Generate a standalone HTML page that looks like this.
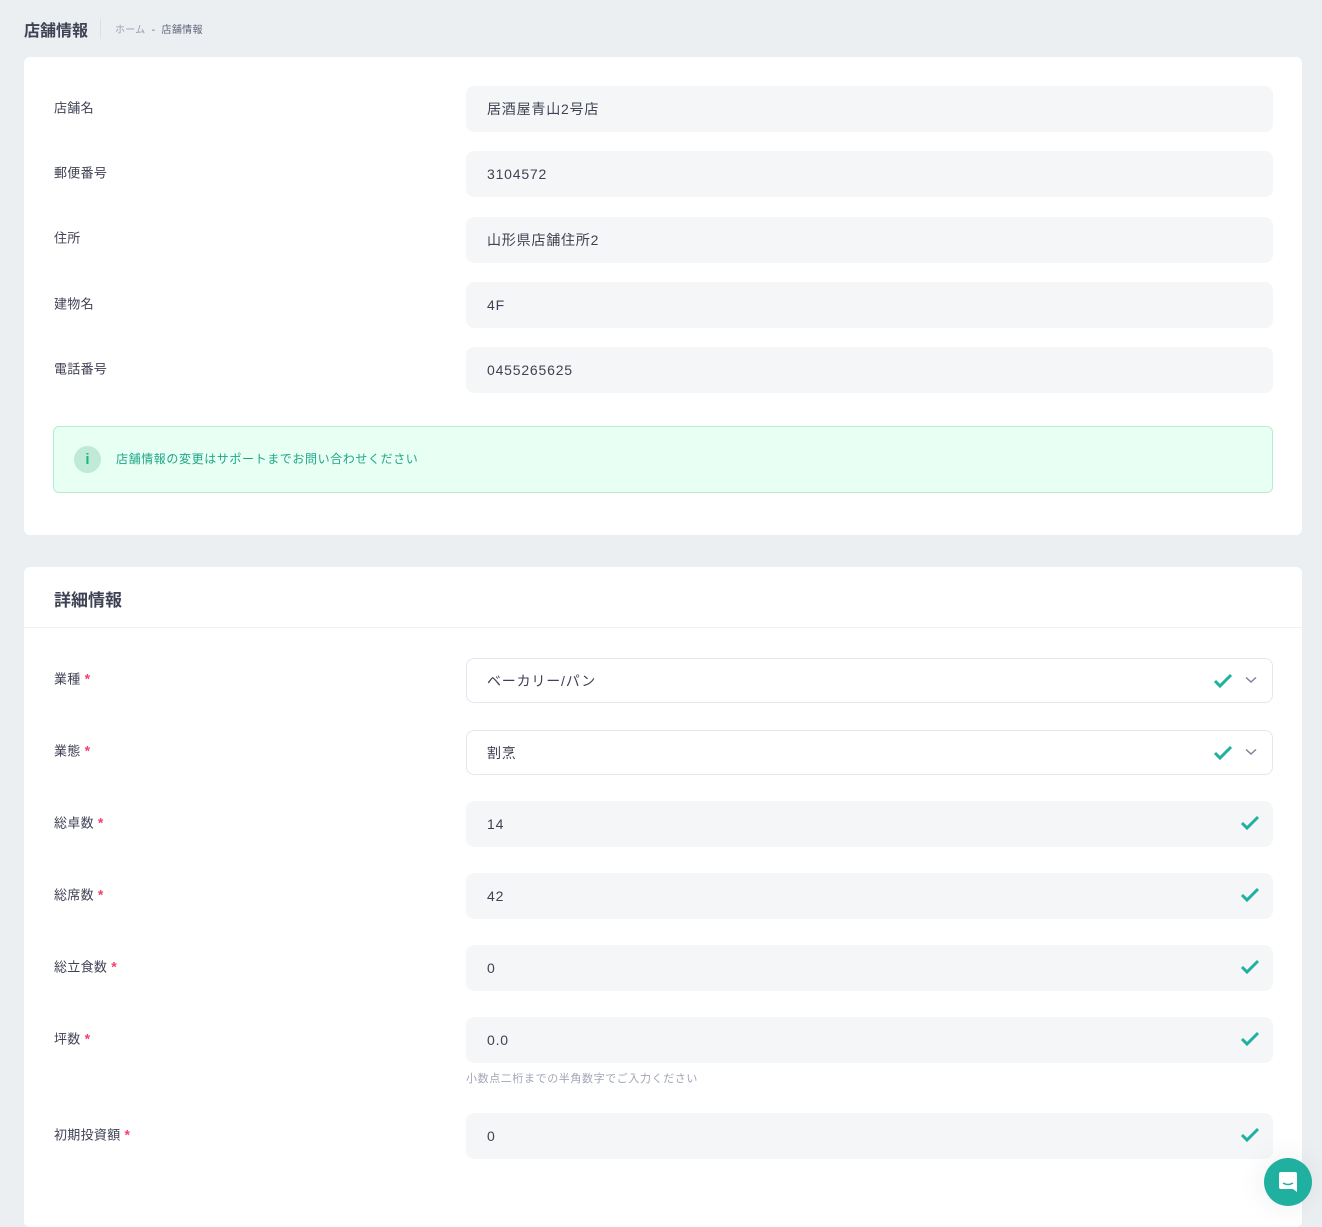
<!DOCTYPE html>
<html><head><meta charset="utf-8"><style>
*{box-sizing:border-box;margin:0;padding:0}
body{width:1322px;height:1216px;overflow:hidden;background:#eceff2;font-family:"Liberation Sans","Noto Sans CJK JP",sans-serif;color:#3f4254;position:relative}
.a{position:absolute}
.card{position:absolute;left:24px;width:1278px;background:#fff;border-radius:6px}
.lbl{position:absolute;left:54px;font-size:13px;color:#3f4254;transform:translateY(-50%);letter-spacing:0.3px}
.lbl b{color:#f1416c;font-weight:bold;margin-left:4px;font-size:14px}
.inp{position:absolute;left:466px;width:807px;height:46px;background:#f5f6f7;border-radius:8px;font-size:14px;color:#3f4254;padding-left:21px;line-height:46px;letter-spacing:0.8px}
.sel{background:#fff;border:1px solid #e4e6ef;line-height:44px;padding-left:20px}
.chk{position:absolute;top:13px}
</style></head><body>
<div class="a" style="left:24px;top:17px;font-size:16px;font-weight:bold;color:#3f4254">店舗情報</div>
<div class="a" style="left:100px;top:19px;width:1px;height:20px;background:#dcdfe6"></div>
<div class="a" style="left:115px;top:21px;font-size:10px;color:#9a9cae;letter-spacing:0.3px">ホーム <span style="color:#5e6278">&nbsp;-&nbsp; 店舗情報</span></div>

<div class="card" style="top:57px;height:478px"></div>
<div class="lbl" style="top:107px">店舗名</div><div class="inp" style="top:86px">居酒屋青山2号店</div>
<div class="lbl" style="top:172px">郵便番号</div><div class="inp" style="top:151px">3104572</div>
<div class="lbl" style="top:237px">住所</div><div class="inp" style="top:217px">山形県店舗住所2</div>
<div class="lbl" style="top:303px">建物名</div><div class="inp" style="top:282px">4F</div>
<div class="lbl" style="top:368px">電話番号</div><div class="inp" style="top:347px">0455265625</div>
<div class="a" style="left:53px;top:426px;width:1220px;height:67px;background:#e8fff3;border:1px solid #b8ecd2;border-radius:6px"></div>
<div class="a" style="left:74px;top:446px;width:27px;height:27px;border-radius:50%;background:#bfead7;color:#1cb389;font-weight:bold;font-size:15px;text-align:center;line-height:27px">i</div>
<div class="a" style="left:116px;top:450px;font-size:12px;color:#1fa688;letter-spacing:0.6px">店舗情報の変更はサポートまでお問い合わせください</div>

<div class="card" style="top:567px;height:660px"></div>
<div class="a" style="left:54px;top:586px;font-size:17px;font-weight:bold;color:#3f4254">詳細情報</div>
<div class="a" style="left:24px;top:627px;width:1278px;height:1px;background:#eff0f3"></div>

<div class="lbl" style="top:678px">業種<b>*</b></div>
<div class="inp sel" style="top:658px;height:45px">ベーカリー/パン
<svg class="chk" style="left:746px" width="20" height="18" viewBox="0 0 20 18"><path d="M2 9l5 5L18 3" fill="none" stroke="#20b0a0" stroke-width="3"/></svg>
<svg class="a" style="left:778px;top:17px" width="12" height="8" viewBox="0 0 12 8"><path d="M1 1.5l5 4.5 5-4.5" fill="none" stroke="#7e8299" stroke-width="1.5"/></svg></div>
<div class="lbl" style="top:750px">業態<b>*</b></div>
<div class="inp sel" style="top:730px;height:45px">割烹
<svg class="chk" style="left:746px" width="20" height="18" viewBox="0 0 20 18"><path d="M2 9l5 5L18 3" fill="none" stroke="#20b0a0" stroke-width="3"/></svg>
<svg class="a" style="left:778px;top:17px" width="12" height="8" viewBox="0 0 12 8"><path d="M1 1.5l5 4.5 5-4.5" fill="none" stroke="#7e8299" stroke-width="1.5"/></svg></div>

<div class="lbl" style="top:822px">総卓数<b>*</b></div><div class="inp" style="top:801px">14<svg class="chk" style="left:774px" width="20" height="18" viewBox="0 0 20 18"><path d="M2 9l5 5L18 3" fill="none" stroke="#20b0a0" stroke-width="3"/></svg></div>
<div class="lbl" style="top:894px">総席数<b>*</b></div><div class="inp" style="top:873px">42<svg class="chk" style="left:774px" width="20" height="18" viewBox="0 0 20 18"><path d="M2 9l5 5L18 3" fill="none" stroke="#20b0a0" stroke-width="3"/></svg></div>
<div class="lbl" style="top:966px">総立食数<b>*</b></div><div class="inp" style="top:945px">0<svg class="chk" style="left:774px" width="20" height="18" viewBox="0 0 20 18"><path d="M2 9l5 5L18 3" fill="none" stroke="#20b0a0" stroke-width="3"/></svg></div>
<div class="lbl" style="top:1038px">坪数<b>*</b></div><div class="inp" style="top:1017px">0.0<svg class="chk" style="left:774px" width="20" height="18" viewBox="0 0 20 18"><path d="M2 9l5 5L18 3" fill="none" stroke="#20b0a0" stroke-width="3"/></svg></div>
<div class="a" style="left:466px;top:1070px;font-size:11px;color:#a1a5b7;letter-spacing:0.6px">小数点二桁までの半角数字でご入力ください</div>
<div class="lbl" style="top:1134px">初期投資額<b>*</b></div><div class="inp" style="top:1113px">0<svg class="chk" style="left:774px" width="20" height="18" viewBox="0 0 20 18"><path d="M2 9l5 5L18 3" fill="none" stroke="#20b0a0" stroke-width="3"/></svg></div>

<div class="a" style="left:1264px;top:1158px;width:48px;height:48px;border-radius:50%;background:#20b0a0;box-shadow:0 0 30px rgba(0,0,0,.08)">
<svg class="a" style="left:14px;top:13px" width="20" height="22" viewBox="0 0 20 22"><path d="M3 1h14a2 2 0 0 1 2 2v18l-4-3H3a2 2 0 0 1-2-2V3a2 2 0 0 1 2-2z" fill="#fff"/><path d="M5 12q5 3 10 0" fill="none" stroke="#20b0a0" stroke-width="1.5"/></svg></div>
</body></html>
